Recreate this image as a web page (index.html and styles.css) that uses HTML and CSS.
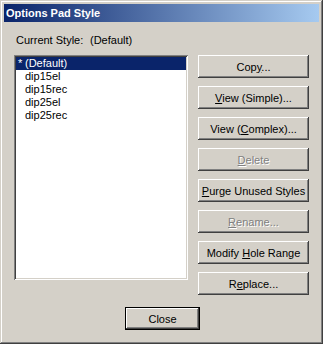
FILE: index.html
```html
<!DOCTYPE html>
<html lang="en">

<head>
    <meta charset="UTF-8">
    <meta name="viewport" content="width=device-width, initial-scale=1.0">
    <title>Options Pad Style</title>
    <link rel="stylesheet" href="styles.css">
</head>

<body>

    <div class="window">
        <div class="titlebar">
            <span class="title">Options Pad Style</span>
        </div>

        <div class="content">
            <div class="current-row">
                <span class="current-label">Current Style:</span>
                <span class="current-value">(Default)</span>
            </div>

            <div class="main-row">
                <div class="listbox">
                    <div class="list-item selected"><span class="mark">*</span>(Default)</div>
                    <div class="list-item"><span class="mark"></span>dip15el</div>
                    <div class="list-item"><span class="mark"></span>dip15rec</div>
                    <div class="list-item"><span class="mark"></span>dip25el</div>
                    <div class="list-item"><span class="mark"></span>dip25rec</div>
                </div>

                <div class="button-column">
                    <button class="btn">Cop<u>y</u>...</button>
                    <button class="btn"><u>V</u>iew (Simple)...</button>
                    <button class="btn">View (<u>C</u>omplex)...</button>
                    <button class="btn" disabled><u>D</u>elete</button>
                    <button class="btn"><u>P</u>urge Unused Styles</button>
                    <button class="btn" disabled><u>R</u>ename...</button>
                    <button class="btn">Modify <u>H</u>ole Range</button>
                    <button class="btn">R<u>e</u>place...</button>
                </div>
            </div>

            <div class="footer">
                <button class="btn btn-default">Close</button>
            </div>
        </div>
    </div>

</body>

</html>
```

FILE: styles.css
```css
html,
body {
    margin: 0;
    padding: 0;
    background-color: #d4d0c8;
}

body {
    font-family: "Liberation Sans", Arial, sans-serif;
    font-size: 11px;
    color: #000000;
}

.window {
    width: 323px;
    height: 344px;
    box-sizing: border-box;
    padding: 4px;
    background-color: #d4d0c8;
    box-shadow: inset -1px -1px #404040, inset 1px 1px #d4d0c8,
        inset -2px -2px #808080, inset 2px 2px #ffffff;
}

.titlebar {
    height: 18px;
    padding-left: 2px;
    background: linear-gradient(to right, #0a246a, #a6caf0);
    display: flex;
    align-items: center;
}

.title {
    color: #ffffff;
    font-weight: bold;
    font-size: 11px;
}

.content {
    padding: 12px 0 0 10px;
}

.current-row {
    display: flex;
    line-height: 13px;
    padding-left: 2px;
}

.current-label {
    width: 74px;
}

.main-row {
    display: flex;
    margin-top: 8px;
}

.listbox {
    width: 174px;
    height: 225px;
    box-sizing: border-box;
    padding: 2px;
    background-color: #ffffff;
    box-shadow: inset 1px 1px #808080, inset -1px -1px #ffffff,
        inset 2px 2px #404040, inset -2px -2px #d4d0c8;
}

.list-item {
    height: 13px;
    line-height: 13px;
    padding-left: 2px;
    white-space: nowrap;
}

.list-item.selected {
    background-color: #0a246a;
    color: #ffffff;
}

.mark {
    display: inline-block;
    width: 7px;
}

.button-column {
    display: flex;
    flex-direction: column;
    gap: 8px;
    margin-left: 10px;
}

.btn {
    width: 111px;
    height: 23px;
    padding: 0;
    border: none;
    background-color: #d4d0c8;
    font-family: "Liberation Sans", Arial, sans-serif;
    font-size: 11px;
    color: #000000;
    box-shadow: inset -1px -1px #404040, inset 1px 1px #ffffff,
        inset -2px -2px #808080, inset 2px 2px #d4d0c8;
}

.btn:disabled {
    color: #808080;
    text-shadow: 1px 1px 0 #ffffff;
}

.footer {
    display: flex;
    margin-top: 12px;
    padding-left: 111px;
}

.btn-default {
    width: 75px;
    border: 1px solid #000000;
}
```
